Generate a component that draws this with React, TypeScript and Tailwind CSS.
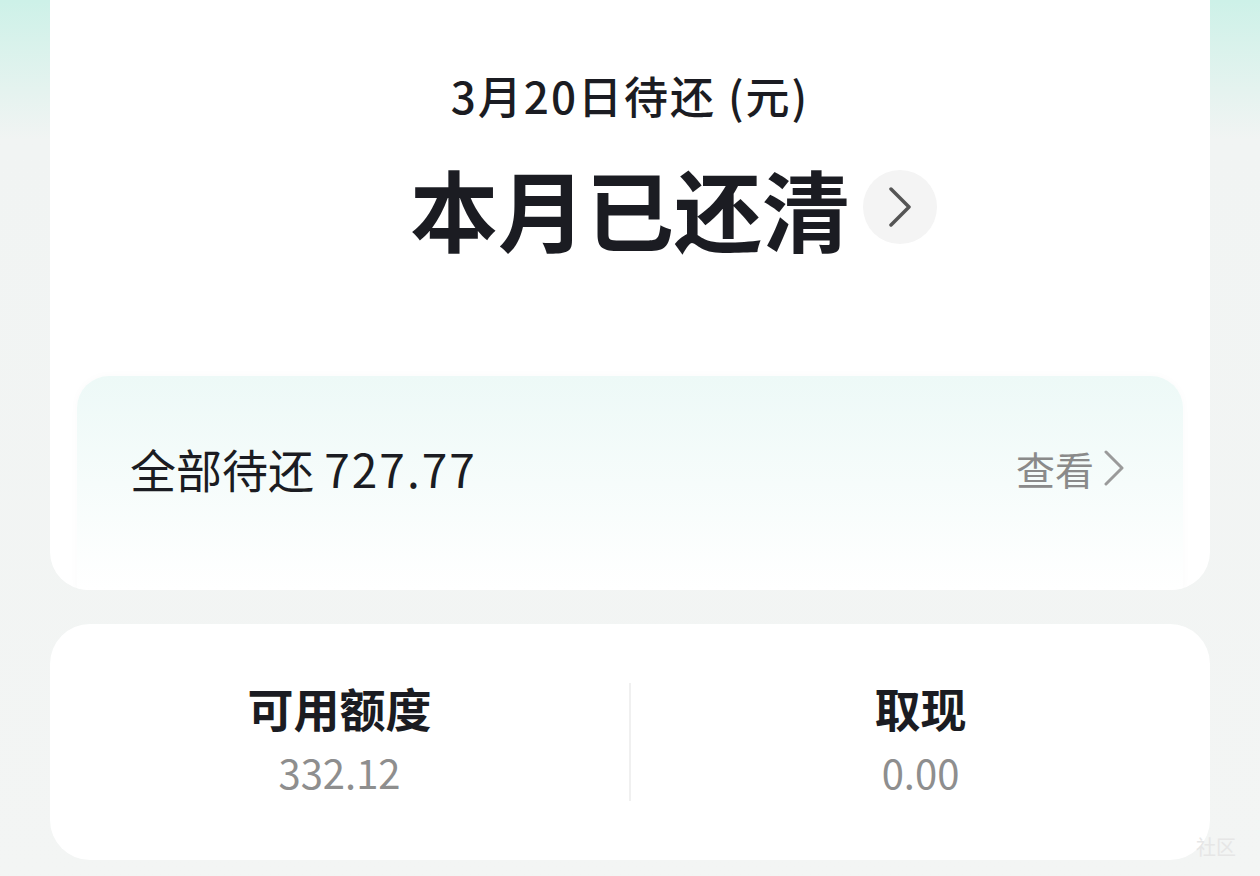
export default function App() {
  const font = { fontFamily: '"Noto Sans CJK SC", "Noto Sans", sans-serif' };

  return (
    <div
      className="relative w-[1260px] h-[876px] overflow-hidden bg-gradient-to-b from-[#cdf1e8] via-[#f1f4f3] via-[16%] to-[#f3f5f4]"
      style={font}
    >
      <div className="mx-[50px] flex flex-col">
        {/* repayment card */}
        <div className="h-[590px] bg-white rounded-b-[38px] overflow-hidden flex flex-col items-center pt-[70px]">
          <div className="text-[44px] leading-[50px] font-medium text-[#1b1c22] tracking-[2px]">3月20日待还 (元)</div>

          <div className="relative mt-[37px]">
            <div className="text-[88px] leading-[100px] font-bold text-[#1b1c22]">本月已还清</div>
            <div className="absolute left-full top-1/2 -translate-y-1/2 ml-[13px] w-[74px] h-[74px] rounded-full bg-[#f4f4f4] flex items-center justify-center">
              <svg width="24" height="40" viewBox="0 0 24 40" fill="none">
                <path d="M3 2 L21 20 L3 38" stroke="#555" strokeWidth="3.5" strokeLinecap="round" strokeLinejoin="round" />
              </svg>
            </div>
          </div>

          <div className="mt-[119px] w-[1106px] h-[214px] rounded-t-[32px] bg-gradient-to-b from-[#edf9f7] to-white shadow-[0_0_10px_rgba(0,0,0,0.025)] flex items-center justify-between pb-[30px] pl-[53px] pr-[58px]">
            <div className="text-[46px] leading-[56px] text-[#1b1c22]">
              全部待还 <span className="tracking-[2px]">727.77</span>
            </div>
            <div className="flex items-center gap-[10px] text-[39px] leading-[50px] text-[#8a8a8a]">
              <span>查看</span>
              <svg width="21" height="36" viewBox="0 0 21 36" fill="none">
                <path d="M2 2 L18 18 L2 34" stroke="#9a9a9a" strokeWidth="3" strokeLinecap="round" strokeLinejoin="round" />
              </svg>
            </div>
          </div>
        </div>

        {/* quota card */}
        <div className="mt-[34px] h-[236px] bg-white rounded-[40px] flex items-center">
          <div className="flex-1 flex flex-col items-center -mt-[8px]">
            <div className="text-[46px] leading-[56px] font-bold text-[#1b1c22]">可用额度</div>
            <div className="mt-[12px] text-[40px] leading-[50px] text-[#8e8e8e]">332.12</div>
          </div>
          <div className="w-[2px] h-[118px] bg-[#f0f0f0]" />
          <div className="flex-1 flex flex-col items-center -mt-[8px]">
            <div className="text-[46px] leading-[56px] font-bold text-[#1b1c22]">取现</div>
            <div className="mt-[12px] text-[40px] leading-[50px] text-[#8e8e8e]">0.00</div>
          </div>
        </div>
      </div>

      <div className="absolute left-[1196px] top-[832px] text-[20px] text-[#e6e6e6]">社区</div>
    </div>
  );
}
